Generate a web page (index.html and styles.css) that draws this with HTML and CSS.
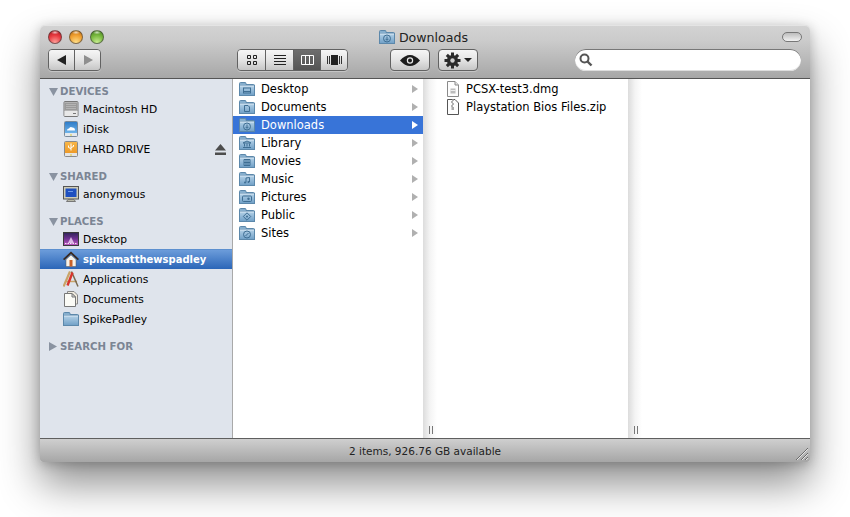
FILE: index.html
```html
<!DOCTYPE html>
<html lang="en">
<head>
<meta charset="utf-8">
<title>Downloads</title>
<link rel="stylesheet" href="styles.css">
</head>
<body>
<svg class="defs" xmlns="http://www.w3.org/2000/svg">
  <defs>
    <linearGradient id="fb" x1="0" y1="0" x2="0" y2="1"><stop offset="0" stop-color="#b5d2e8"/><stop offset="1" stop-color="#6f9fc6"/></linearGradient>
    <linearGradient id="ds" x1="0" y1="0" x2="0" y2="1"><stop offset="0" stop-color="#2e2456"/><stop offset=".45" stop-color="#6a2f8e"/><stop offset="1" stop-color="#c25cc0"/></linearGradient>
    <linearGradient id="blue" x1="0" y1="0" x2="0" y2="1"><stop offset="0" stop-color="#2f7cc8"/><stop offset="1" stop-color="#6fb4ea"/></linearGradient>
    <linearGradient id="orange" x1="0" y1="0" x2="0" y2="1"><stop offset="0" stop-color="#f8b648"/><stop offset="1" stop-color="#ee9a28"/></linearGradient>
    <symbol id="folder" viewBox="0 0 16 14">
      <path d="M.5 3V1.500Q.5.500 1.500.500H6Q7 .500 7 1.500V2.500H14.500Q15.500 2.500 15.500 3.500V13.500H.5Z" fill="#86aecd" stroke="#5c88ab"/>
      <rect x=".5" y="3.500" width="15" height="10" fill="url(#fb)" stroke="#5c88ab"/>
      <path d="M1 4H15" stroke="#d8e8f4"/>
    </symbol>
    <symbol id="g-desktop" viewBox="0 0 16 14"><use href="#folder"/><rect x="4.500" y="6" width="7" height="5" fill="none" stroke="#3f6e93"/><path d="M5 9.500H11" stroke="#3f6e93"/></symbol>
    <symbol id="g-documents" viewBox="0 0 16 14"><use href="#folder"/><path d="M5.500 5.500H9L10.500 7V11.500H5.500Z" fill="none" stroke="#3f6e93"/></symbol>
    <symbol id="g-downloads" viewBox="0 0 16 14"><use href="#folder"/><circle cx="8" cy="8.500" r="3.500" fill="none" stroke="#3f6e93"/><path d="M8 6.500V10M6.500 8.800L8 10.300L9.500 8.800" fill="none" stroke="#3f6e93"/></symbol>
    <symbol id="g-library" viewBox="0 0 16 14"><use href="#folder"/><path d="M8 5L12 7H4ZM5.500 7.500V10.500M8 7.500V10.500M10.500 7.500V10.500M4 11.500H12" fill="none" stroke="#3f6e93"/></symbol>
    <symbol id="g-movies" viewBox="0 0 16 14"><use href="#folder"/><path d="M5 5.500H11V11.500H5ZM7 5.500V11.500M9 5.500V11.500M5 8.500H11" fill="none" stroke="#3f6e93"/></symbol>
    <symbol id="g-music" viewBox="0 0 16 14"><use href="#folder"/><path d="M7 10.500V6L10.500 5.500V10" fill="none" stroke="#3f6e93"/><circle cx="6" cy="10.500" r="1" fill="#3f6e93"/><circle cx="9.500" cy="10" r="1" fill="#3f6e93"/></symbol>
    <symbol id="g-pictures" viewBox="0 0 16 14"><use href="#folder"/><rect x="3.500" y="6" width="9" height="5.500" rx="1" fill="none" stroke="#3f6e93"/><circle cx="9.500" cy="8.700" r="1.200" fill="#3f6e93"/></symbol>
    <symbol id="g-public" viewBox="0 0 16 14"><use href="#folder"/><path d="M8 4.800L11.700 8.500L8 12.200L4.300 8.500Z" fill="none" stroke="#3f6e93"/><circle cx="8" cy="8.500" r="1" fill="#3f6e93"/></symbol>
    <symbol id="g-sites" viewBox="0 0 16 14"><use href="#folder"/><circle cx="8" cy="8.500" r="3.500" fill="none" stroke="#3f6e93"/><path d="M6.500 10L9.500 7" stroke="#3f6e93"/></symbol>
    <symbol id="grip" viewBox="0 0 6 8"><path d="M1.500 0V8M4.500 0V8" stroke="#777"/></symbol>
  </defs>
</svg>

<main class="window">
  <header class="head">
    <div class="titlerow">
      <div class="lights">
        <span class="light red"></span><span class="light amber"></span><span class="light green"></span>
      </div>
      <div class="title">
        <svg class="title-icon" viewBox="0 0 16 14"><use href="#g-downloads"/></svg>
        <span>Downloads</span>
      </div>
      <span class="pill"></span>
    </div>
    <div class="tools">
      <div class="seg nav">
        <button class="seg-btn nav-btn"><svg width="12" height="12" viewBox="0 0 12 12"><path d="M1 6L10 1V11Z" fill="#222"/></svg></button>
        <button class="seg-btn nav-btn"><svg width="12" height="12" viewBox="0 0 12 12"><path d="M11 6L2 1V11Z" fill="#8f8f8f"/></svg></button>
      </div>
      <div class="seg view">
        <button class="seg-btn v1"><svg width="12" height="12" viewBox="0 0 12 12"><path d="M1.500 1.500H4.500V4.500H1.500ZM7.500 1.500H10.500V4.500H7.500ZM1.500 7.500H4.500V10.500H1.500ZM7.500 7.500H10.500V10.500H7.500Z" fill="none" stroke="#222"/></svg></button>
        <button class="seg-btn v2"><svg width="12" height="10" viewBox="0 0 12 10"><path d="M0 .5H12M0 3.500H12M0 6.500H12M0 9.500H12" stroke="#222"/></svg></button>
        <button class="seg-btn v3 active"><svg width="13" height="10" viewBox="0 0 13 10"><path d="M.5.500H12.500V9.500H.5ZM4.500.5V9.500M8.500.5V9.500" fill="none" stroke="#fff"/></svg></button>
        <button class="seg-btn v4"><svg width="15" height="10" viewBox="0 0 15 10"><path d="M.5 1V9M2.500 1V9" stroke="#333"/><rect x="4" y="0" width="7" height="10" fill="#222"/><path d="M12.500 1V9M14.500 1V9" stroke="#333"/></svg></button>
      </div>
      <button class="tool eye"><svg width="20" height="11" viewBox="0 0 20 11"><path d="M0 5.500Q10-5.500 20 5.500Q10 16.500 0 5.500Z" fill="#1c1c1c"/><circle cx="10" cy="5.500" r="3.200" fill="#e8e8e8"/><circle cx="10" cy="5.500" r="2" fill="#1c1c1c"/></svg></button>
      <button class="tool gear"><svg width="17" height="17" viewBox="0 0 17 17"><g fill="#2a2a2a"><circle cx="8.500" cy="8.500" r="5.500"/><rect x="7" y="0.500" width="3" height="16"/><rect x="0.500" y="7" width="16" height="3"/><rect x="7" y="0.500" width="3" height="16" transform="rotate(45 8.500 8.500)"/><rect x="7" y="0.500" width="3" height="16" transform="rotate(-45 8.500 8.500)"/></g><circle cx="8.500" cy="8.500" r="2.200" fill="#cfcfcf"/></svg><svg width="8" height="4" viewBox="0 0 8 4"><path d="M0 0H8L4 4Z" fill="#222"/></svg></button>
      <div class="search"><svg width="14" height="14" viewBox="0 0 14 14"><circle cx="5.500" cy="5.500" r="4" fill="none" stroke="#555" stroke-width="2"/><path d="M8.500 8.500L12.500 12.500" stroke="#555" stroke-width="2.400"/></svg></div>
    </div>
  </header>

  <div class="body">
    <nav class="sidebar">
      <div class="group first">
        <h2 class="heading"><svg class="tri" width="9" height="8" viewBox="0 0 9 8"><path d="M0 0H9L4.500 8Z"/></svg>DEVICES</h2>
        <div class="item"><svg class="ico" viewBox="0 0 16 16"><rect x="1" y=".5" width="14" height="15" rx="1" fill="#cfcfcf" stroke="#777"/><rect x="2" y="1.500" width="12" height="8" fill="#9a9a9a"/><path d="M3 3.500H13M3 5.500H13M3 7.500H13" stroke="#b4b4b4"/><rect x="1.500" y="10" width="13" height="5" fill="#e8e8e8"/><rect x="10" y="12" width="3" height="1" fill="#777"/></svg><span>Macintosh HD</span></div>
        <div class="item"><svg class="ico" viewBox="0 0 16 16"><rect x="1.500" y=".5" width="13" height="15" rx="1" fill="#e4e8ec" stroke="#7a8a9a"/><rect x="2" y="1" width="12" height="11" fill="url(#blue)"/><path d="M4 9.500Q4 7.500 6 7.500Q7 5 9.500 6.500Q12 6.500 12 9.500Z" fill="#fff"/><rect x="7" y="13.500" width="2" height="1" fill="#d8c840"/></svg><span>iDisk</span></div>
        <div class="item"><svg class="ico" viewBox="0 0 16 16"><rect x="1.500" y=".5" width="13" height="15" rx="1" fill="#e4e4e4" stroke="#8a8a8a"/><rect x="2" y="1" width="12" height="11" fill="url(#orange)"/><path d="M8 2.500V9.500M5.500 4.500V6.500L8 7.500M10.500 4V5.500L8 6.500" fill="none" stroke="#fff"/><rect x="7" y="13.500" width="2" height="1" fill="#d8c840"/></svg><span>HARD DRIVE</span><svg class="eject" width="11" height="11" viewBox="0 0 11 11"><path d="M5.500 0L11 6.500H0ZM0 8.500H11V11H0Z" fill="#4d4d4d"/></svg></div>
      </div>
      <div class="group">
        <h2 class="heading"><svg class="tri" width="9" height="8" viewBox="0 0 9 8"><path d="M0 0H9L4.500 8Z"/></svg>SHARED</h2>
        <div class="item"><svg class="ico" viewBox="0 0 16 16"><rect x=".5" y=".5" width="15" height="12.500" fill="#cfcdb8" stroke="#555"/><rect x="2.500" y="2.500" width="11" height="8.500" fill="#1f50c0"/><path d="M5 5.500H10" stroke="#6f9ae8"/><path d="M5 13.500H11L12.500 15.500H3.500Z" fill="#b9b9a8" stroke="#777"/></svg><span>anonymous</span></div>
      </div>
      <div class="group">
        <h2 class="heading"><svg class="tri" width="9" height="8" viewBox="0 0 9 8"><path d="M0 0H9L4.500 8Z"/></svg>PLACES</h2>
        <div class="item"><svg class="ico" viewBox="0 0 16 16"><rect x=".5" y="1.500" width="15" height="13" fill="url(#ds)" stroke="#3a3a3a"/><path d="M5 12L8 6L11 12Z" fill="#f0d8f4" opacity=".8"/><path d="M2 12.500H14" stroke="#f4e4f8" stroke-dasharray="1.500 1"/></svg><span>Desktop</span></div>
        <div class="item selected"><svg class="ico" viewBox="0 0 16 16"><path d="M3 8.500L8 4L13 8.500V15.500H3Z" fill="#f6f2ea" stroke="#555" stroke-width=".5"/><path d="M8 .5L16 8L14.800 9.300L8 3L1.200 9.300L0 8Z" fill="#3a2a20"/><rect x="6.500" y="9" width="3" height="6.500" fill="#c8622a"/></svg><span>spikematthewspadley</span></div>
        <div class="item"><svg class="ico" viewBox="0 0 16 16"><path d="M.5 15.500L7 .5" stroke="#c9a468" stroke-width="2.200" fill="none"/><path d="M2.500 10.500H14" stroke="#c9a468" stroke-width="1.500"/><path d="M8.500 .5L15 15.500" stroke="#7a6a50" stroke-width="1.500" fill="none"/><path d="M4.500 14.500L9.500 1.500" stroke="#d8342c" stroke-width="2.400" fill="none"/></svg><span>Applications</span></div>
        <div class="item"><svg class="ico" viewBox="0 0 16 16"><path d="M4.500.5H11L14.500 4V13H4.500Z" fill="#efeade" stroke="#888"/><path d="M1.500 2.500H9L12.500 6V15.500H1.500Z" fill="#fbfbf6" stroke="#777"/><path d="M9 2.500V6H12.500Z" fill="#ddd" stroke="#777"/></svg><span>Documents</span></div>
        <div class="item"><svg class="ico" viewBox="0 0 16 14"><use href="#folder"/></svg><span>SpikePadley</span></div>
      </div>
      <div class="group">
        <h2 class="heading"><svg class="tri closed" width="8" height="9" viewBox="0 0 8 9"><path d="M0 0L8 4.500L0 9Z"/></svg>SEARCH FOR</h2>
      </div>
    </nav>

    <section class="col col-a">
      <ul class="rows">
        <li class="row"><svg class="fico" viewBox="0 0 16 14"><use href="#g-desktop"/></svg><span>Desktop</span><i class="arrow"></i></li>
        <li class="row"><svg class="fico" viewBox="0 0 16 14"><use href="#g-documents"/></svg><span>Documents</span><i class="arrow"></i></li>
        <li class="row on"><svg class="fico" viewBox="0 0 16 14"><use href="#g-downloads"/></svg><span>Downloads</span><i class="arrow"></i></li>
        <li class="row"><svg class="fico" viewBox="0 0 16 14"><use href="#g-library"/></svg><span>Library</span><i class="arrow"></i></li>
        <li class="row"><svg class="fico" viewBox="0 0 16 14"><use href="#g-movies"/></svg><span>Movies</span><i class="arrow"></i></li>
        <li class="row"><svg class="fico" viewBox="0 0 16 14"><use href="#g-music"/></svg><span>Music</span><i class="arrow"></i></li>
        <li class="row"><svg class="fico" viewBox="0 0 16 14"><use href="#g-pictures"/></svg><span>Pictures</span><i class="arrow"></i></li>
        <li class="row"><svg class="fico" viewBox="0 0 16 14"><use href="#g-public"/></svg><span>Public</span><i class="arrow"></i></li>
        <li class="row"><svg class="fico" viewBox="0 0 16 14"><use href="#g-sites"/></svg><span>Sites</span><i class="arrow"></i></li>
      </ul>
    </section>
    <div class="split"><svg class="grip" width="6" height="8"><use href="#grip"/></svg></div>

    <section class="col col-b">
      <ul class="rows">
        <li class="row file"><svg class="doc" viewBox="0 0 12 16"><path d="M.5.5H8L11.500 4V15.500H.5Z" fill="#fdfdfd" stroke="#8a8a8a"/><path d="M8 .5V4H11.500" fill="#e4e4e4" stroke="#8a8a8a"/><rect x="3.500" y="7.500" width="5" height="5" fill="#bcbcbc"/><path d="M3.500 9.500H8.500" stroke="#eee"/></svg><span>PCSX-test3.dmg</span></li>
        <li class="row file"><svg class="doc" viewBox="0 0 12 16"><path d="M.5.5H8L11.500 4V15.500H.5Z" fill="#fdfdfd" stroke="#555"/><path d="M6 0V2M5 2V4M6 4V6M5 6V8" stroke="#999" stroke-width="1.500"/><rect x="4.500" y="8" width="2.500" height="3" fill="#aaa"/></svg><span>Playstation Bios Files.zip</span></li>
      </ul>
    </section>
    <div class="split"><svg class="grip" width="6" height="8"><use href="#grip"/></svg></div>

    <section class="col col-c"></section>
  </div>

  <footer class="status">
    <span>2 items, 926.76 GB available</span>
    <svg class="resize" width="14" height="14" viewBox="0 0 14 14"><path d="M1 13L13 1M6 13L13 6M10 13L13 10" stroke="#6a6a6a" fill="none"/><path d="M2 13L13 2M7 13L13 7M11 13L13 11" stroke="#e4e4e4" fill="none"/></svg>
  </footer>
</main>
</body>
</html>
```

FILE: styles.css
```css
* { box-sizing: border-box; }
html, body { margin: 0; height: 100%; background: #fff; overflow: hidden; }
body { font-family: "DejaVu Sans", sans-serif; color: #000; }
.defs { display: block; width: 0; height: 0; }
ul { list-style: none; margin: 0; padding: 0; }
button { font: inherit; padding: 0; margin: 0; }
svg { flex: none; display: block; }

.window {
  width: 770px; height: 437px; margin: 25px 0 0 40px;
  display: flex; flex-direction: column;
  border-radius: 5px 5px 3px 3px;
  background: #fff;
  box-shadow: 0 22px 40px rgba(0,0,0,.44), 0 2px 12px rgba(0,0,0,.22);
}

/* title + toolbar */
.head {
  height: 54px; flex: none;
  border-bottom: 1px solid #555;
  border-radius: 5px 5px 0 0;
  background: linear-gradient(#d3d3d3 0, #cbcbcb 30%, #a7a7a7 100%);
  box-shadow: inset 0 1px 0 #e4e4e4;
}
.titlerow {
  height: 24px; padding: 0 8px 0 8px;
  display: grid; grid-template-columns: 1fr auto 1fr; align-items: center;
}
.lights { display: flex; gap: 7px; }
.light { width: 14px; height: 14px; border-radius: 50%; border: 1px solid rgba(60,60,60,.6); }
.red { background: radial-gradient(ellipse 4px 2px at 50% 12%, rgba(255,255,255,.7), rgba(255,255,255,0)), radial-gradient(circle at 50% 95%, #ffa09a 0, #e83a40 55%, #a81820 100%); }
.amber { background: radial-gradient(ellipse 4px 2px at 50% 12%, rgba(255,255,255,.7), rgba(255,255,255,0)), radial-gradient(circle at 50% 95%, #ffe08a 0, #f0a030 55%, #b86a10 100%); }
.green { background: radial-gradient(ellipse 4px 2px at 50% 12%, rgba(255,255,255,.7), rgba(255,255,255,0)), radial-gradient(circle at 50% 95%, #c8ee92 0, #78b83e 55%, #437f1c 100%); }
.title { display: flex; align-items: center; gap: 4px; font-size: 12.6px; color: #222; margin-right: 3px; }
.title-icon { width: 16px; height: 14px; }
.pill {
  justify-self: end; width: 20px; height: 10px; border-radius: 5px;
  border: 1px solid #777;
  background: linear-gradient(#bdbdbd, #f2f2f2);
}

.tools { height: 22px; padding: 0 9px 0 8px; display: flex; align-items: stretch; }
.seg { display: flex; border: 1px solid #626262; border-radius: 4px; overflow: hidden; box-shadow: 0 1px 0 rgba(255,255,255,.3); }
.seg-btn, .tool {
  display: flex; align-items: center; justify-content: center;
  border: 0; background: linear-gradient(#f6f6f6, #e4e4e4 50%, #c6c6c6);
}
.seg-btn + .seg-btn { border-left: 1px solid #626262; }
.nav { width: 53px; }
.nav-btn { flex: 1; }
.view { width: 111px; margin-left: 136px; }
.v1 { width: 27px; }
.v2 { width: 28px; }
.v3 { width: 27px; }
.v4 { flex: 1; }
.active { background: linear-gradient(#6e6e6e, #545454); }
.tool {
  width: 40px; border: 1px solid #626262; border-radius: 4px;
  box-shadow: 0 1px 0 rgba(255,255,255,.3);
}
.eye { margin-left: 42px; }
.gear { margin-left: 8px; gap: 3px; }
.search {
  margin-left: auto; width: 226px;
  display: flex; align-items: center; padding-left: 4px;
  border-radius: 11px; background: #fff;
  box-shadow: inset 0 1px 0 #777, inset 0 -1px 0 #ddd;
}

/* body */
.body { flex: 1; min-height: 0; display: flex; background: #fff; border-bottom: 1px solid #5f5f5f; }
.sidebar {
  width: 193px; flex: none; padding-top: 3px;
  background: #dfe4ec; border-right: 1px solid #a9a9a9;
}
.group { margin-bottom: 8px; }
.heading {
  margin: 0; height: 17px; padding: 2px 0 0 9px;
  display: flex; align-items: center; gap: 2px;
  font-size: 10.2px; font-weight: 700; color: #7b8594;
}
.tri { fill: #8a93a1; }
.closed { margin-right: 1px; }
.item {
  height: 20px; padding: 0 6px 0 23px;
  display: flex; align-items: center; gap: 4px;
  font-size: 10.7px;
}
.ico { width: 16px; height: 16px; }
.eject { margin-left: auto; }
.selected {
  color: #fff; font-weight: 700; font-size: 10px;
  background: linear-gradient(#6f9fdc, #2b66b8);
  box-shadow: inset 0 1px 0 #5c8fcf;
}

.col { flex: none; padding-top: 1px; }
.col-a { width: 190px; }
.col-b { width: 191px; }
.col-c { flex: 1; }
.row {
  height: 18px; padding: 0 5px 0 6px;
  display: flex; align-items: center; gap: 6px;
  font-size: 11.5px;
}
.fico { width: 16px; height: 14px; }
.arrow {
  margin-left: auto; width: 0; height: 0;
  border-left: 6px solid #b0b0b0; border-top: 4px solid transparent; border-bottom: 4px solid transparent;
}
.on { background: #3874d8; color: #fff; }
.on .arrow { border-left-color: #fff; }
.file { padding-left: 10px; gap: 7px; }
.doc { width: 12px; height: 16px; }

.split {
  width: 14px; flex: none; display: flex; flex-direction: column; justify-content: flex-end; align-items: center;
  padding: 0 0 4px 2px;
  background: linear-gradient(90deg, #dcdcdc, #f4f4f4 50%, #fff);
}

/* status */
.status {
  height: 23px; flex: none; position: relative;
  display: flex; align-items: center; justify-content: center;
  font-size: 10.5px; color: #222;
  background: linear-gradient(#cfcfcf, #a6a6a6);
  border-radius: 0 0 3px 3px;
}
.resize { position: absolute; right: 1px; bottom: 1px; }
```
